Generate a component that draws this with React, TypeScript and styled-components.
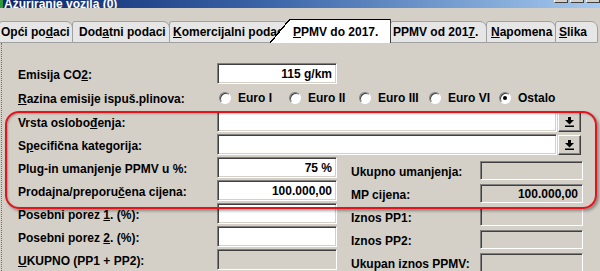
import styled, { createGlobalStyle } from 'styled-components';

const GlobalStyle = createGlobalStyle`
  html, body {
    margin: 0;
    padding: 0;
    background: #d4d0c8;
    overflow: hidden;
  }
  body {
    font-family: 'Liberation Sans', Arial, sans-serif;
    font-size: 12px;
    font-weight: bold;
    color: #000;
  }
`;

const Window = styled.div`
  position: relative;
  width: 600px;
  height: 271px;
  overflow: hidden;
  background: #d4d0c8;
`;

const TitleBar = styled.div`
  height: 8px;
  display: flex;
  align-items: flex-end;
  overflow: hidden;
  background: linear-gradient(90deg, #0a246a 0%, #3b66a8 45%, #a6caf0 100%);
`;

const TitleIcon = styled.div`
  align-self: stretch;
  width: 3px;
  background: #2c9a3c;
`;

const TitleText = styled.span`
  margin-left: 1px;
  margin-bottom: -3px;
  line-height: 14px;
  color: #fff;
  white-space: nowrap;
`;

const TitleButtons = styled.div`
  margin-left: auto;
  align-self: flex-start;
  display: flex;
  gap: 2px;
  margin-top: -9px;
`;

const TitleButton = styled.div`
  width: 14px;
  height: 12px;
  box-sizing: border-box;
  background: #d4d0c8;
  border: 1px solid;
  border-color: #fff #404040 #404040 #fff;
  display: flex;
  align-items: flex-end;
  justify-content: center;
  padding-bottom: 2px;
`;

const MinGlyph = styled.div`
  width: 6px;
  height: 2px;
  background: #000;
`;

const MaxGlyph = styled.div`
  width: 7px;
  height: 6px;
  box-sizing: border-box;
  border: 1px solid #000;
  border-top-width: 2px;
`;

const TabStrip = styled.div`
  display: flex;
  align-items: flex-end;
  height: 24px;
  margin-top: 11px;
`;

const Tab = styled.div<{ $w: number; $pad: number }>`
  box-sizing: border-box;
  width: ${(p) => p.$w}px;
  height: 22px;
  margin-left: -1px;
  padding-left: ${(p) => p.$pad}px;
  padding-bottom: 3px;
  display: flex;
  align-items: flex-end;
  line-height: 14px;
  white-space: nowrap;
  overflow: hidden;
  background: #e6e6e6;
  border: 1px solid #a0a0a0;
  border-radius: 3px 7px 0 0;
`;

const ActiveTab = styled.div<{ $w: number; $pad: number }>`
  position: relative;
  z-index: 1;
  box-sizing: border-box;
  width: ${(p) => p.$w}px;
  height: 24px;
  margin-left: -20px;
  padding-left: ${(p) => p.$pad}px;
  padding-bottom: 4px;
  display: flex;
  align-items: flex-end;
  line-height: 14px;
  white-space: nowrap;
  border-right: 1px solid #404040;
  background:
    linear-gradient(#000, #000) 20px 0 / calc(100% - 20px) 1px no-repeat,
    linear-gradient(
        to bottom right,
        transparent calc(50% - 0.7px),
        #000 calc(50% - 0.7px),
        #000 calc(50% + 0.7px),
        #fff calc(50% + 0.7px)
      )
      0 0 / 20px 100% no-repeat,
    linear-gradient(#fff, #fff) 20px 0 / calc(100% - 20px) 100% no-repeat;
`;

const Panel = styled.div`
  margin-left: 1px;
  height: 228px;
  box-sizing: border-box;
  padding: 19px 0 0 16px;
  border-left: 1px dotted #707070;
`;

const Row = styled.div<{ $h: number }>`
  display: flex;
  align-items: center;
  height: ${(p) => p.$h}px;
`;

const Label = styled.div<{ $w?: number }>`
  width: ${(p) => p.$w ?? 199}px;
  flex-shrink: 0;
  padding-top: 2px;
  line-height: 14px;
  white-space: nowrap;
`;

const U = styled.span`
  text-decoration: underline;
  text-underline-offset: 1px;
`;

const Field = styled.div<{ $w: number; $h?: number; $off?: boolean }>`
  box-sizing: border-box;
  width: ${(p) => p.$w}px;
  height: ${(p) => p.$h ?? 21}px;
  flex-shrink: 0;
  padding: 0 4px 0 4px;
  display: flex;
  align-items: center;
  justify-content: flex-end;
  line-height: 14px;
  background: ${(p) => (p.$off ? '#d4d0c8' : '#fff')};
  border-style: solid;
  border-width: 1px;
  border-color: #808080 #fff #fff #808080;
  box-shadow: inset 1px 1px 0 #404040, inset -1px -1px 0 #d4d0c8;
`;

const DropButton = styled.div`
  box-sizing: border-box;
  width: 23px;
  height: 20px;
  margin-left: 1px;
  display: flex;
  align-items: center;
  justify-content: center;
  background: #d4d0c8;
  border: 1px solid;
  border-color: #fff #404040 #404040 #fff;
  box-shadow: inset -1px -1px 0 #808080;
`;

const Side = styled.div`
  display: flex;
  align-items: center;
  margin-left: 14px;
  margin-top: 6px;
`;

const RadioGroup = styled.div`
  display: flex;
  margin-left: 2px;
`;

const RadioItem = styled.label`
  width: 70px;
  display: flex;
  align-items: center;
  gap: 7px;
  line-height: 14px;
  white-space: nowrap;
`;

const RadioDot = styled.span<{ $on?: boolean }>`
  box-sizing: border-box;
  width: 12px;
  height: 12px;
  flex-shrink: 0;
  border-radius: 50%;
  border: 1px solid;
  border-color: #808080 #fff #fff #808080;
  background: #fff;
  box-shadow: inset 1px 1px 0 #404040;
  display: flex;
  align-items: center;
  justify-content: center;
  &::after {
    content: '';
    width: 4px;
    height: 4px;
    border-radius: 50%;
    background: ${(p) => (p.$on ? '#000' : 'transparent')};
  }
`;

const Highlight = styled.div`
  position: absolute;
  left: 5px;
  top: 111px;
  width: 592px;
  height: 98px;
  box-sizing: border-box;
  border: 2px solid #e2141c;
  border-radius: 14px;
  box-shadow: 2px 2px 3px rgba(0, 0, 0, 0.35), inset 1px 1px 2px rgba(0, 0, 0, 0.25);
  pointer-events: none;
`;

const DownIcon = () => (
  <svg width="9" height="10" viewBox="0 0 9 10">
    <rect x="3" y="0" width="3" height="3" fill="#000" />
    <polygon points="0,3 9,3 4.5,7.5" fill="#000" />
    <rect x="0" y="8.5" width="9" height="1.5" fill="#000" />
  </svg>
);

const tabs = [
  { w: 74, pad: 1, label: <>Opći po<U>d</U>aci</> },
  { w: 98, pad: 6, label: <>Dod<U>a</U>tni podaci</> },
  { w: 121, pad: 3, label: <><U>K</U>omercijalni podaci</> },
];

const tabsAfter = [
  { w: 97, pad: 2, label: <>PPMV od 201<U>7</U>.</> },
  { w: 70, pad: 4, label: <><U>N</U>apomena</> },
  { w: 43, pad: 3, label: <><U>S</U>lika</> },
];

const radios = ['Euro I', 'Euro II', 'Euro III', 'Euro VI', 'Ostalo'];

export default function App() {
  return (
    <Window>
      <GlobalStyle />
      <TitleBar>
        <TitleIcon />
        <TitleText>Ažuriranje vozila (0)</TitleText>
        <TitleButtons>
          <TitleButton>
            <MinGlyph />
          </TitleButton>
          <TitleButton>
            <MaxGlyph />
          </TitleButton>
          <TitleButton />
        </TitleButtons>
      </TitleBar>

      <TabStrip>
        {tabs.map((t, i) => (
          <Tab key={i} $w={t.w} $pad={t.pad}>
            {t.label}
          </Tab>
        ))}
        <ActiveTab $w={121} $pad={23}>
          <U>P</U>PMV do 2017.
        </ActiveTab>
        {tabsAfter.map((t, i) => (
          <Tab key={i} $w={t.w} $pad={t.pad}>
            {t.label}
          </Tab>
        ))}
      </TabStrip>

      <Panel>
        <Row $h={23}>
          <Label>
            Emisija CO<U>2</U>:
          </Label>
          <Field $w={120}>115 g/km</Field>
        </Row>
        <Row $h={25}>
          <Label>
            <U>R</U>azina emisije ispuš.plinova:
          </Label>
          <RadioGroup>
            {radios.map((r) => (
              <RadioItem key={r}>
                <RadioDot $on={r === 'Ostalo'} />
                {r}
              </RadioItem>
            ))}
          </RadioGroup>
        </Row>
        <Row $h={23}>
          <Label>
            Vrsta oslobo<U>đ</U>enja:
          </Label>
          <Field $w={340} />
          <DropButton>
            <DownIcon />
          </DropButton>
        </Row>
        <Row $h={23}>
          <Label>
            S<U>p</U>ecifična kategorija:
          </Label>
          <Field $w={340} />
          <DropButton>
            <DownIcon />
          </DropButton>
        </Row>
        <Row $h={23}>
          <Label>Plug-in umanjenje PPMV u %:</Label>
          <Field $w={120}>75 %</Field>
          <Side>
            <Label $w={129}>Ukupno umanjenja:</Label>
            <Field $w={103} $h={19} $off />
          </Side>
        </Row>
        <Row $h={23}>
          <Label>
            Prodajna/preporu<U>č</U>ena cijena:
          </Label>
          <Field $w={120}>100.000,00</Field>
          <Side>
            <Label $w={129}>MP cijena:</Label>
            <Field $w={103} $h={19} $off>
              100.000,00
            </Field>
          </Side>
        </Row>
        <Row $h={23}>
          <Label>
            Posebni porez <U>1</U>. (%):
          </Label>
          <Field $w={120} />
          <Side>
            <Label $w={129}>Iznos PP1:</Label>
            <Field $w={103} $h={19} $off />
          </Side>
        </Row>
        <Row $h={23}>
          <Label>
            Posebni porez <U>2</U>. (%):
          </Label>
          <Field $w={120} />
          <Side>
            <Label $w={129}>Iznos PP2:</Label>
            <Field $w={103} $h={19} $off />
          </Side>
        </Row>
        <Row $h={23}>
          <Label>
            <U>U</U>KUPNO (PP1 + PP2):
          </Label>
          <Field $w={120} $off />
          <Side>
            <Label $w={129}>Ukupan iznos PPMV:</Label>
            <Field $w={103} $h={19} $off />
          </Side>
        </Row>
      </Panel>

      <Highlight />
    </Window>
  );
}
